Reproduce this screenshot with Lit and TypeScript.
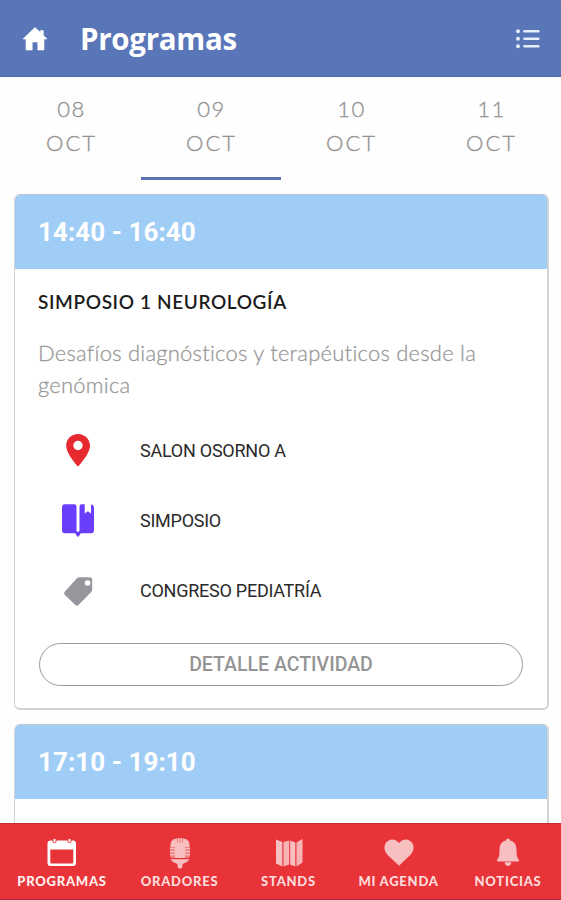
import { LitElement, html, svg, css } from "lit";
import { customElement } from "lit/decorators.js";
import { classMap } from "lit/directives/class-map.js";

const days = ["08", "09", "10", "11"];

const homeIcon = html`<svg class="home" viewBox="0 0 26 25" fill="#fff"><path d="M13 1.500 L18.500 6.500 V4.500 H21.300 V9.200 L25 13 H22 V24 H15.800 V16 H10.200 V24 H4 V13 H1 Z" stroke="#fff" stroke-width=".6" stroke-linejoin="round"/></svg>`;
const listIcon = html`<svg class="list" viewBox="0 0 24 20" fill="#e6edfb">
  <circle cx="2" cy="2.2" r="2"/><circle cx="2" cy="9.8" r="2"/><circle cx="2" cy="17.3" r="2"/>
  <rect x="7.2" y="1" width="16.4" height="2.4" rx="1.2"/><rect x="7.2" y="8.6" width="16.4" height="2.4" rx="1.2"/><rect x="7.2" y="16.1" width="16.4" height="2.4" rx="1.2"/></svg>`;

const pinIcon = html`<svg class="info" viewBox="0 0 34 34" fill="#e62a30"><path fill-rule="evenodd" d="M17 1C10.400 1 5.200 6 5.200 12.400C5.200 21 17 33.500 17 33.500S29 21 29 12.400C29 6 23.600 1 17 1ZM17 7.800A4.700 4.700 0 1 1 17 17.200A4.700 4.700 0 1 1 17 7.800Z"/></svg>`;
const bookIcon = html`<svg class="info" viewBox="0 0 34 34" fill="#6a3cfb"><path d="M4 1.200H13.200Q15.500 1.200 15.500 3.500V27.500Q15.500 28.700 17 28.700T18.500 27.500V3.500Q18.500 1.200 20.500 1.200H23.700V10.600L26.900 8.200L30 10.600V1.400Q33 1.800 33 4.500V27Q33 30.300 30 30.300H20.500Q18.800 30.300 18.800 32L17 34L15.200 32Q15.200 30.300 13.500 30.300H4Q1 30.300 1 27V4.400Q1 1.200 4 1.200Z"/></svg>`;
const tagIcon = html`<svg class="info" viewBox="0 0 34 34" fill="#95979d"><path fill-rule="evenodd" d="M18.300 3.200H28.600Q31.200 3.200 31.200 5.800V15.600Q31.200 17 30.200 18.100L17.500 31Q15.900 32.500 14.300 31L3.700 20.700Q2.200 19.200 3.700 17.700L16 4.300Q17 3.200 18.300 3.200ZM26.600 6.200A2.800 2.800 0 1 0 26.600 11.800A2.800 2.800 0 1 0 26.600 6.200Z"/></svg>`;

const navIcons = {
  calendar: svg`<path fill="#fff" fill-rule="evenodd" d="M5 2.500H7V1H10V2.500H22V1H25V2.500H27Q30 2.500 30 5.500V25Q30 28 27 28H4.500Q1.500 28 1.500 25V5.500Q1.500 2.500 5 2.500ZM4.300 11.500V24.400Q4.300 25.400 5.300 25.400H26.300Q27.300 25.400 27.300 24.400V11.500Z"/><path d="M7 0V4.200Q8.500 5.500 10 4.200V0M22 0V4.200Q23.500 5.500 25 4.200V0" fill="none" stroke="#e83338" stroke-width=".9"/>`,
  mic: svg`<path d="M16 0Q25 0 25.500 6V9H6.500V6Q7 0 16 0Z"/><path d="M11 9H21V20H11Z"/><path d="M6 9H11V20H8Q6 19.500 6 17.500ZM21 9H26V17.500Q26 19.500 24 20H21Z" fill-opacity=".55"/><path d="M6 10.600H11M6 13.600H11M6 16.600H11M21 10.600H26M21 13.600H26M21 16.600H26" stroke="#f8bfc1" stroke-width="1.400"/><path d="M6.600 21.300H25.400Q24.500 24 20 25.300Q18.500 25.800 18.300 27.500V29.500Q18.300 30.500 16 30.500T13.700 29.500V27.500Q13.500 25.800 12 25.300Q7.500 24 6.600 21.300Z"/><path d="M13.500 0V4.500M16 0V5.500M18.500 0V4.500" fill="none" stroke="#e83338" stroke-opacity=".5"/>`,
  map: svg`<path d="M3 1.500L9.300 4V28.500L3 25.500ZM10.500 4L16.200 2.500V26.500L10.500 28.500ZM17.200 2.500L22.300 4.500V28.500L17.200 26.500ZM23.500 4.500L29.500 1V24.500L23.500 28.500Z"/><path d="M10.500 4L16.200 2.500V26.500L10.500 28.500ZM23.500 4.500L29.500 1V24.500L23.500 28.500Z" fill="#e83338" fill-opacity=".08"/>`,
  heart: svg`<path d="M16 27.800L4.200 16.400C1.300 13.500 .8 9 2.200 6C5 .600 11.800-.200 16 5C20.200-.200 27 .600 29.800 6C31.200 9 30.700 13.500 27.800 16.400Z"/>`,
  bell: svg`<path d="M16 .500Q18 .500 18 2.600C22.800 3.800 24.500 7.600 24.500 12C24.500 18 25.300 20 26.800 21.400Q27.600 23.400 26 23.400H6Q4.400 23.400 5.200 21.400C6.700 20 7.500 18 7.500 12C7.500 7.600 9.200 3.800 14 2.600Q14 .500 16 .500ZM12.600 24.200H19.400Q18.800 28 16 28T12.600 24.200Z"/>`,
};

@customElement("session-card")
export class SessionCard extends LitElement {
  static properties = { time: { type: String } };
  declare time: string;
  static styles = css`
    :host { display: block; box-sizing: border-box; border: 2px solid #d3d3d5; border-left-width: 1px; border-top: 1px solid #bfc6cf; border-radius: 6px; background: #fff; overflow: hidden; }
    .time { height: 74px; box-sizing: border-box; padding-left: 23px; background: #a0cdf6; color: #fff; font: 700 26px/75px Roboto, sans-serif; letter-spacing: .05px; }
  `;
  render() {
    return html`<div class="time">${this.time}</div><slot></slot>`;
  }
}

@customElement("app-root")
export class AppRoot extends LitElement {
  static styles = css`
    :host { display: flex; flex-direction: column; width: 561px; height: 900px; overflow: hidden; background: #fefefe; font-family: Lato, sans-serif; }
    svg { display: block; flex: none; }
    header { display: flex; align-items: center; flex: none; height: 77px; box-sizing: border-box; padding: 0 21px 0 22px; background: linear-gradient(#5c74b9, #5976b9 12px, #5976b9 75px, #4b67ad); color: #fff; }
    .home { width: 26px; height: 25px; }
    h1 { flex: 1; margin: 0 0 0 32px; font: 700 29.500px/76px "Open Sans", sans-serif; letter-spacing: -.3px; }
    .list { width: 24px; height: 20px; }
    .days { display: grid; grid-template-columns: repeat(4, 1fr); flex: none; height: 103px; padding-left: 1px; }
    .day { box-sizing: border-box; padding: 15px 0 0 1px; border-bottom: 3px solid transparent; color: #929292; text-align: center; font: 300 22px/34px Lato, sans-serif; -webkit-text-stroke: .3px #929292; }
    .num { letter-spacing: 1.4px; }
    .month { letter-spacing: 2px; }
    .active { border-color: #5973b3; }
    main { flex: 1; min-height: 0; overflow: hidden; padding: 14px 12px 0 14px; display: flex; flex-direction: column; gap: 14px; }
    session-card { flex: none; height: 516px; }
    .body { padding: 18px 23px 0; }
    h2 { margin: 0; color: #1c1c1c; font: 600 19px/30px Lato, sans-serif; letter-spacing: .62px; white-space: nowrap; }
    .desc { margin: 20px 0 0; color: #999; font: 300 22px/32px Lato, sans-serif; -webkit-text-stroke: .3px #999; letter-spacing: .23px; font-variant-ligatures: none; white-space: nowrap; }
    .row { display: flex; align-items: center; height: 70.300px; }
    .rows { padding: 14px 0 0 23px; }
    .info { width: 34px; height: 34px; }
    .row span { margin-left: 45px; padding-top: 1.500px; color: #2a2a2a; font: 400 18px/30px Roboto, sans-serif; letter-spacing: -.25px; white-space: nowrap; }
    .button { margin: 17px 0 0 1px; height: 43px; width: 484px; box-sizing: border-box; border: 1.500px solid #9b9b9b; border-radius: 22px; background: none; color: #959595; text-align: center; font: 500 19.500px/39px Roboto, sans-serif; padding: 0; display: block; }
    nav { flex: none; display: grid; grid-template-columns: 124px 111px 107px 113px 106px; height: 77px; box-sizing: border-box; border-top: 1px solid #c52c35; border-bottom: 1px solid #a92831; background: #e83338; }
    .tab { display: flex; flex-direction: column; align-items: center; padding-top: 14px; color: #fcdcdc; font: 900 13px/20px Lato, sans-serif; letter-spacing: .75px; white-space: nowrap; }
    .tab svg { width: 32px; height: 31px; margin-bottom: 2px; }
    .current { color: #fff0f0; }
  `;

  tab(label: string, icon: unknown, current = false) {
    return html`<div class=${classMap({ tab: true, current })}><svg viewBox="0 0 32 31" fill="#f8bfc1">${icon}</svg><span>${label}</span></div>`;
  }

  render() {
    return html`
      <header>${homeIcon}<h1>Programas</h1>${listIcon}</header>
      <div class="days">
        ${days.map((d) => html`<div class=${classMap({ day: true, active: d === "09" })}><div class="num">${d}</div><div class="month">OCT</div></div>`)}
      </div>
      <main>
        <session-card time="14:40 - 16:40">
          <div class="body">
            <h2>SIMPOSIO 1 NEUROLOGÍA</h2>
            <p class="desc">Desafíos diagnósticos y terapéuticos desde la<br>genómica</p>
            <div class="rows">
              <div class="row">${pinIcon}<span>SALON OSORNO A</span></div>
              <div class="row">${bookIcon}<span>SIMPOSIO</span></div>
              <div class="row">${tagIcon}<span>CONGRESO PEDIATRÍA</span></div>
            </div>
            <button class="button">DETALLE ACTIVIDAD</button>
          </div>
        </session-card>
        <session-card time="17:10 - 19:10"></session-card>
      </main>
      <nav>
        ${this.tab("PROGRAMAS", navIcons.calendar, true)}
        ${this.tab("ORADORES", navIcons.mic)}
        ${this.tab("STANDS", navIcons.map)}
        ${this.tab("MI AGENDA", navIcons.heart)}
        ${this.tab("NOTICIAS", navIcons.bell)}
      </nav>
    `;
  }
}
